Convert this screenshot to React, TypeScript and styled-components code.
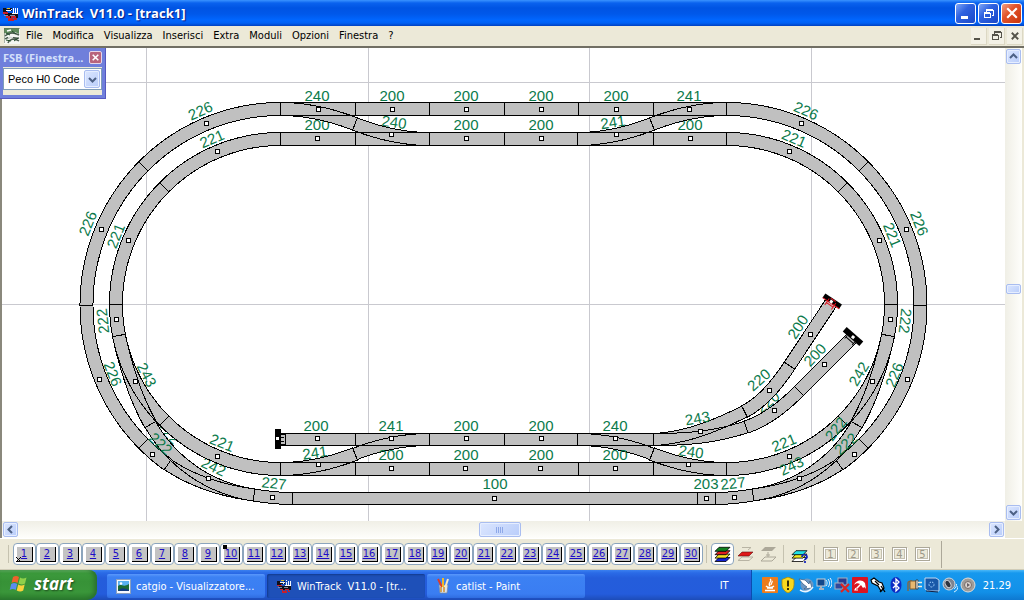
import React from "react";
import styled, { createGlobalStyle, css } from "styled-components";

const UI_FONT = `"DejaVu Sans Condensed", "Open Sans", sans-serif`;

const GlobalStyle = createGlobalStyle`
  * { box-sizing: border-box; }
  html, body { margin: 0; padding: 0; }
  body { font-family: ${UI_FONT}; font-size: 11px; color: #000; overflow: hidden; }
  button, select { font: inherit; color: inherit; margin: 0; padding: 0; border: 0; background: none; }
  svg { display: block; flex: none; }
`;

/* ---------- window frame ---------- */

const Desktop = styled.div`
  display: flex;
  flex-direction: column;
  height: 100vh;
  min-height: 400px;
  background: #ece9d8;
`;

const TitleBar = styled.header`
  display: flex;
  align-items: center;
  flex: none;
  height: 26px;
  padding: 0 2px 0 2px;
  gap: 3px;
  background: linear-gradient(#3a93ff 0, #0a62ee 3px, #0054e3 8px, #0058ea 14px, #0066ff 20px, #0061f5 23px, #0040c0 26px);
`;

const TitleText = styled.h1`
  flex: 1;
  margin: 0;
  font: bold 13px/20px "Open Sans", sans-serif;
  color: #fff;
  text-shadow: 1px 1px 1px #0a1883;
  white-space: pre;
`;

const CaptionButtons = styled.div`
  display: flex;
  gap: 2px;
`;

const CaptionButton = styled.button<{ $close?: boolean }>`
  display: grid;
  place-items: center;
  width: 21px;
  height: 21px;
  border: 1px solid #fff;
  border-radius: 3px;
  background: ${(p) =>
    p.$close
      ? "linear-gradient(135deg, #f0a084, #e2542c 40%, #c8350c)"
      : "linear-gradient(135deg, #7ea6f8, #2f62e0 40%, #1a48c8)"};
`;

const MenuBar = styled.nav`
  display: flex;
  align-items: center;
  flex: none;
  height: 22px;
  padding: 0 1px 0 4px;
  border-bottom: 2px solid #716f64;
  background: #ece9d8;
`;

const MenuItems = styled.div`
  display: flex;
  padding-left: 1px;
`;

const MenuItem = styled.button`
  height: 18px;
  padding: 0 5px;
  line-height: 18px;
`;

const Spacer = styled.span`
  flex: 1;
`;

const MdiButton = styled.button`
  display: grid;
  place-items: center;
  width: 16px;
  height: 17px;
  margin-left: 2px;
  background: #f3f1e6;
  border-right: 1px solid #dcd8c4;
  border-bottom: 1px solid #dcd8c4;
`;

/* ---------- drawing area ---------- */

const WorkArea = styled.main`
  position: relative;
  display: grid;
  grid-template-columns: minmax(0, 1fr) 17px;
  grid-template-rows: minmax(0, 1fr) 17px;
  flex: 1;
  min-height: 0;
  padding-right: 2px;
  border-left: 2px solid #8a887c;
  background: #ece9d8;
`;

const Plan = styled.svg`
  width: 100%;
  height: 100%;
  background: #fff;
`;

const TrackLabel = styled.text`
  font-family: "Liberation Sans", sans-serif;
  font-size: 15px;
  fill: #0b7a4b;
  text-anchor: middle;
`;

const ScrollBar = styled.div<{ $vertical?: boolean }>`
  display: flex;
  flex-direction: ${(p) => (p.$vertical ? "column" : "row")};
  align-items: center;
  padding: 1px;
  background: ${(p) =>
    p.$vertical
      ? "linear-gradient(90deg, #f0efe6, #fefefb)"
      : "linear-gradient(#f0efe6, #fefefb)"};
`;

const ScrollSpace = styled.span<{ $grow: number }>`
  flex: ${(p) => p.$grow} 1 0;
`;

const blueButton = css`
  display: grid;
  place-items: center;
  border: 1px solid #a9bdf0;
  border-radius: 2px;
  background: linear-gradient(135deg, #dbe6ff, #b9cdfa);
  box-shadow: inset 0 0 0 1px #e6eeff;
`;

const ScrollButton = styled.button`
  ${blueButton}
  width: 15px;
  height: 15px;
`;

const ScrollThumb = styled.button<{ $vertical?: boolean }>`
  ${blueButton}
  width: ${(p) => (p.$vertical ? "15px" : "42px")};
  height: ${(p) => (p.$vertical ? "10px" : "15px")};
`;

/* ---------- floating palette ---------- */

const Palette = styled.section`
  position: absolute;
  top: 0;
  left: -2px;
  width: 106px;
  padding: 0 3px 3px;
  border-right: 1px solid #5558c0;
  border-bottom: 1px solid #5558c0;
  background: #6f7fdb;
`;

const PaletteTitle = styled.div`
  display: flex;
  align-items: center;
  height: 19px;
  gap: 1px;
  font: bold 11px/18px "Open Sans", sans-serif;
  color: #d5e0fb;
`;

const PaletteCaption = styled.span`
  flex: 1;
  white-space: nowrap;
`;

const PaletteClose = styled.button`
  display: grid;
  place-items: center;
  width: 13px;
  height: 13px;
  border: 1px solid #e6d5e8;
  border-radius: 2px;
  background: #b8647c;
`;

const PaletteBody = styled.div`
  padding: 1px 0 5px;
  background: #ece9d8;
`;

const ComboBox = styled.label`
  display: grid;
  grid-template-columns: 1fr 17px;
  align-items: center;
  height: 22px;
  border: 1px solid #7f9db9;
  background: #fff;
`;

const Combo = styled.select`
  grid-area: 1 / 1 / 2 / 3;
  appearance: none;
  width: 100%;
  height: 20px;
  padding: 0 18px 0 4px;
  font-family: "Liberation Sans", sans-serif;
  outline: none;
`;

const ComboArrow = styled.span`
  ${blueButton}
  grid-area: 1 / 2 / 2 / 3;
  width: 16px;
  height: 18px;
  pointer-events: none;
`;

/* ---------- layer toolbar ---------- */

const ToolBar = styled.div`
  display: flex;
  align-items: center;
  flex: none;
  height: 32px;
  padding: 0 0 0 5px;
  border-top: 1px solid #fff;
  border-bottom: 1px solid #d0ccb8;
  background: #ece9d8;
`;

const ToolGroup = styled.div`
  display: flex;
  align-items: center;
  height: 27px;
  border-right: 1px solid #aca899;
  padding-right: 7px;
`;

const Rule = styled.span`
  width: 1px;
  height: 18px;
  margin: 0 4px 0 3px;
  background: #c5c2b0;
`;

const LayerButton = styled.button`
  display: grid;
  place-items: center;
  width: 23px;
  height: 22px;
  border: 1px solid #8ca5bd;
  border-radius: 4px;
  background: #fff;
`;

const LayerFace = styled.span`
  position: relative;
  width: 16px;
  height: 15px;
  border-right: 1px solid #000;
  border-bottom: 1px solid #000;
  background: #c3c3c3;
  color: #1c0cc8;
  font: 11px/14px "DejaVu Sans Condensed", sans-serif;
  text-align: center;
  text-decoration: underline;
  white-space: nowrap;
`;

const LayerMark = styled.span`
  position: absolute;
  left: -1px;
  top: -2px;
  width: 4px;
  height: 4px;
  background: #000;
`;

const LayerCross = styled.svg`
  position: absolute;
  left: -1px;
  bottom: -1px;
`;

const ToolButton = styled.button<{ $active?: boolean }>`
  display: grid;
  place-items: center;
  width: 23px;
  height: 22px;
  border: 1px solid ${(p) => (p.$active ? "#8ca5bd" : "transparent")};
  border-radius: 4px;
  background: ${(p) => (p.$active ? "#fff" : "none")};
`;

const SlotFace = styled.span`
  width: 15px;
  height: 14px;
  border: 1px solid #aca899;
  box-shadow: inset 0 0 0 1px #fff, inset 0 0 0 2px #c4c0b0, 1px 1px 0 #fff;
  color: #9c9888;
  font: 11px/13px "DejaVu Sans Condensed", sans-serif;
  text-align: center;
`;

/* ---------- task bar ---------- */

const TaskBar = styled.footer`
  display: flex;
  align-items: stretch;
  flex: none;
  height: 30px;
  background: linear-gradient(#3a80f0 0, #2a6ae6 3px, #245ddb 8px, #245cdc 24px, #1d4cb8 30px);
`;

const StartButton = styled.button`
  display: flex;
  align-items: center;
  width: 97px;
  gap: 5px;
  padding: 0 0 2px 9px;
  margin-right: 10px;
  border-radius: 0 8px 10px 0;
  background: linear-gradient(#6fc06c 0, #3c9a3c 3px, #379237 12px, #3a963a 22px, #2a7a2c 30px);
  box-shadow: inset -3px 0 4px #2a7030;
  color: #fff;
  font: italic bold 17px/20px "Open Sans", sans-serif;
  text-shadow: 1px 1px 2px #1c4a1c;
`;

const TaskButton = styled.button<{ $active?: boolean }>`
  display: flex;
  align-items: center;
  flex: 0 1 158px;
  min-width: 0;
  height: 24px;
  gap: 5px;
  margin: 4px 2px 0 0;
  padding: 0 9px;
  border-radius: 2px;
  color: #fff;
  white-space: pre;
  background: ${(p) =>
    p.$active
      ? "#1e50b8"
      : "linear-gradient(#5a98fc 0, #3c81f3 3px, #3a7df2 20px, #2f6ce0)"};
  box-shadow: ${(p) => (p.$active ? "inset 1px 1px 2px #123a8c" : "none")};
`;

const Language = styled.span`
  align-self: center;
  margin-right: 22px;
  color: #fff;
`;

const Tray = styled.div`
  display: flex;
  align-items: center;
  gap: 2px;
  padding: 0 13px 0 10px;
  border-left: 1px solid #0c4cb0;
  background: linear-gradient(#4ab8f8 0, #1698ee 3px, #1290e8 22px, #0e78d0 30px);
  color: #fff;
`;

const Clock = styled.time`
  margin-left: 5px;
`;

/* ---------- track geometry ---------- */

type Pt = [number, number];
type Sample = { p: Pt; n: Pt };

const CENTER_X2 = 1007;
const flip = (x: number) => CENTER_X2 - x;

function sampleCurve(f: (t: number) => Pt, count: number): Sample[] {
  const out: Sample[] = [];
  for (let i = 0; i <= count; i++) {
    const t = i / count;
    const a = f(t - 0.002);
    const b = f(t + 0.002);
    const dx = b[0] - a[0];
    const dy = b[1] - a[1];
    const len = Math.hypot(dx, dy) || 1;
    out.push({ p: f(t), n: [-dy / len, dx / len] });
  }
  return out;
}

const bezier = (a: Pt, b: Pt, c: Pt, d: Pt) =>
  sampleCurve((t) => {
    const u = 1 - t;
    const k = [u * u * u, 3 * u * u * t, 3 * u * t * t, t * t * t];
    return [
      k[0] * a[0] + k[1] * b[0] + k[2] * c[0] + k[3] * d[0],
      k[0] * a[1] + k[1] * b[1] + k[2] * c[1] + k[3] * d[1],
    ];
  }, 28);

const line = (a: Pt, b: Pt) =>
  sampleCurve((t) => [a[0] + (b[0] - a[0]) * t, a[1] + (b[1] - a[1]) * t], 1);

/** Arc of an ellipse around (cx, cy); angles in degrees, clockwise from east. */
const arc = (cx: number, cy: number, rx: number, ry: number, from: number, to: number) =>
  sampleCurve((t) => {
    const a = ((from + (to - from) * t) * Math.PI) / 180;
    return [cx + rx * Math.cos(a), cy + ry * Math.sin(a)];
  }, 40);

const mirror = (s: Sample[]): Sample[] =>
  s.map(({ p, n }) => ({ p: [flip(p[0]), p[1]] as Pt, n: [-n[0], n[1]] as Pt }));

type Section = { path: Sample[]; half?: number };

const X = [280.5, 355, 429.5, 504, 578.5, 653.5, 726.5];
const TOP_OUT = 109;
const TOP_IN = 139;
const SIDING = 439.5;
const BOT_IN = 469;
const LOW = 498.5;

const outerArc = (a: number, b: number) => arc(280.5, 305, 194, 196, a, b);
const innerArc = (a: number, b: number) => arc(280.5, 304, 164.5, 165, a, b);

const sections: Section[] = [];
const add = (path: Sample[], half?: number) => sections.push({ path, half });
const addBoth = (path: Sample[], half?: number) => {
  add(path, half);
  add(mirror(path), half);
};

addBoth(outerArc(270, 225));
addBoth(outerArc(225, 180));
addBoth(outerArc(180, 135));
addBoth(outerArc(135, 125.5));
addBoth(innerArc(270, 225));
addBoth(innerArc(225, 180));
addBoth(innerArc(180, 169));
for (let i = 0; i < 6; i++) {
  add(line([X[i], TOP_OUT], [X[i + 1], TOP_OUT]));
  add(line([X[i], TOP_IN], [X[i + 1], TOP_IN]));
  add(line([X[i], BOT_IN], [X[i + 1], BOT_IN]));
  if (i < 5) add(line([X[i], SIDING], [X[i + 1], SIDING]), 6);
}
/* crossovers */
addBoth(bezier([X[0], TOP_OUT], [306, TOP_OUT], [332, 115], [355, 124]));
addBoth(bezier([355, 124], [378, 133], [404, TOP_IN], [X[2], TOP_IN]));
addBoth(bezier([X[0], BOT_IN], [306, BOT_IN], [332, 463], [355, 454]));
addBoth(bezier([355, 454], [378, 445], [404, SIDING], [X[2], SIDING]), 6);
/* curved turnouts in the lower corners */
addBoth(bezier([119, 336], [126, 367], [135, 397], [150.5, 424.5]));
addBoth(innerArc(169, 135));
addBoth(innerArc(135, 90));
addBoth(bezier([150.5, 424.5], [172, 463], [211, 489], [254, 495]), 6);
addBoth(bezier([167.8, 464.6], [192, 481], [223, 491], [254, 495]), 6);
addBoth(bezier([254, 495], [266, 497], [280, LOW], [292, LOW]), 6);
add(line([292, LOW], [697.5, LOW]), 6);
add(line([697.5, LOW], [715, LOW]), 6);
/* sidings on the right */
add(bezier([653.5, SIDING], [688, SIDING], [716, 437], [746, 427]), 6);
add(bezier([653.5, SIDING], [687, 438], [717, 425], [744.5, 411.5]), 6);
add(bezier([746, 427], [767, 420], [785, 405], [799, 391]), 6.3);
add(bezier([744.5, 411.5], [763, 402], [778, 383], [789.5, 365.7]), 6.3);
add(line([799, 391], [852, 338]), 6.3);
add(line([789.5, 365.7], [831, 303]), 6.3);

type Label = [string, number, number, number?];

const labelsBelow: Label[] = [
  ["200", 317, 124.5],
  ["200", 690, 124.5],
  ["240", 394, 122.5, 8],
  ["241", 613, 122.5, -8],
  ["241", 315, 453, -8],
  ["240", 691, 452, 8],
  ["242", 213.5, 467, 25],
  ["222", 168, 433, 45],
  ["220", 768, 402, -38],
];

const labelsAbove: Label[] = [
  ["240", 317, 95.5],
  ["200", 392, 95.5],
  ["200", 466, 95.5],
  ["200", 541, 95.5],
  ["200", 616, 95.5],
  ["241", 689, 95.5],
  ["200", 466, 124.5],
  ["200", 541, 124.5],
  ["200", 316, 425.5],
  ["241", 391, 425.5],
  ["200", 466, 425.5],
  ["200", 541, 425.5],
  ["240", 615, 425.5],
  ["200", 391, 455],
  ["200", 466, 455],
  ["200", 541, 455],
  ["200", 615, 455],
  ["100", 495, 484],
  ["203", 706, 484],
  ["226", 200.5, 111, -24],
  ["221", 212, 139, -23],
  ["226", 88, 223.5, -68],
  ["221", 116, 236, -68],
  ["222", 103, 321, -96],
  ["226", 112.5, 374, 68],
  ["243", 146.5, 375, 62],
  ["222", 160.5, 444, 42],
  ["221", 222, 443, 22],
  ["227", 274, 483.5, 6],
  ["226", 806, 111, 24],
  ["221", 794, 138.5, 23],
  ["226", 919, 223.5, 68],
  ["221", 892, 235, 68],
  ["222", 905, 321, 96],
  ["226", 894.5, 375, -68],
  ["242", 859, 374, -60],
  ["222", 836, 429, -52],
  ["222", 846, 444, -42],
  ["221", 784, 443, -22],
  ["243", 791.5, 466, -26],
  ["227", 733, 483.5, -6],
  ["243", 697.5, 418.5, -10],
  ["220", 759, 380, -42],
  ["200", 798, 327, -57],
  ["200", 815, 355, -46],
];

const markers: Pt[] = [
  [318, 109], [392, 109], [466, 109], [541, 109], [616, 109], [689, 109],
  [317, 138], [391, 134], [466, 138], [541, 138], [616, 134], [690, 138],
  [317, 438], [391, 438], [466, 438], [541, 438], [615, 438],
  [318, 464], [391, 468], [465, 468], [540, 468], [615, 468], [688, 464],
  [494, 498], [706, 498], [734, 497], [272, 497],
  [206, 123], [801, 123], [101, 229], [906, 229],
  [217, 151], [789, 151], [128, 240], [879, 240],
  [116, 319], [890, 319], [99, 379], [907, 379], [135, 381], [872, 381],
  [152, 454], [854, 454], [217, 456], [789, 456], [208, 478], [799, 478],
  [700, 431], [769, 390], [774, 410], [810, 334], [824, 364],
];

const pathOf = (pts: Pt[]) => "M" + pts.map((p) => p.map((v) => v.toFixed(2)).join(" ")).join("L");

const edgeOf = (path: Sample[], k: number): Pt[] =>
  path.map(({ p, n }) => [p[0] + n[0] * k, p[1] + n[1] * k]);

function TrackSection({ path, half = 6.5 }: Section) {
  const outline = [...edgeOf(path, half), ...edgeOf(path, -half).reverse()];
  return <path d={pathOf(outline) + "Z"} fill="#c0c0c0" stroke="#000" />;
}

function TrackLabels({ items }: { items: Label[] }) {
  return (
    <>
      {items.map(([text, x, y, turn = 0], i) => (
        <TrackLabel key={i} transform={`translate(${x} ${y}) rotate(${turn})`} y={5}>
          {text}
        </TrackLabel>
      ))}
    </>
  );
}

/** Rails stay visible where two sections share the same bed. */
function TrackEdges() {
  return (
    <g fill="none" stroke="#000" shapeRendering="crispEdges">
      {sections.map(({ path, half = 6.5 }, i) => (
        <path key={i} d={pathOf(edgeOf(path, half)) + pathOf(edgeOf(path, -half))} />
      ))}
    </g>
  );
}

function TrackPlan() {
  return (
    <Plan role="img" aria-label="track1">
      <g transform="translate(-2 -48)">
        <g stroke="#c9c9cf" shapeRendering="crispEdges">
          {[146.5, 368.5, 589.5, 811.5].map((x) => (
            <line key={x} x1={x} x2={x} y1={0} y2={2000} />
          ))}
          {[82.5, 304.5].map((y) => (
            <line key={y} y1={y} y2={y} x1={0} x2={4000} />
          ))}
        </g>
        <TrackLabels items={labelsBelow} />
        <g shapeRendering="crispEdges">
          {sections.map((s, i) => (
            <TrackSection key={i} {...s} />
          ))}
        </g>
        <TrackEdges />
        {/* buffer stops */}
        <g shapeRendering="crispEdges">
          <path d="M281 434h4v10h-4M281 437h3M281 441h3" fill="none" stroke="#000" />
          <rect x={275} y={429} width={6} height={20} fill="#000" />
          <rect x={276} y={437} width={3} height={3} fill="#fff" />
        </g>
        <g transform="translate(832 301.5) rotate(34)">
          <rect x={-10} y={-3} width={20} height={5} fill="#000" />
          <path d="M-10 2h20M-4 -1v8M4 -1v8M-4 4h8M-3 -2h6" stroke="#e0101c" fill="none" />
          <rect x={-2} y={-1} width={3} height={3} fill="#fff" />
        </g>
        <g transform="translate(853 336.5) rotate(41)">
          <rect x={-11} y={-3} width={22} height={6} fill="#000" />
          <path d="M-5 3v4M5 3v4M-5 5h10" stroke="#000" fill="none" />
          <rect x={-1} y={-1} width={3} height={3} fill="#fff" />
        </g>
        <TrackLabels items={labelsAbove} />
        <g fill="#fff" stroke="#000" shapeRendering="crispEdges">
          {markers.map(([x, y], i) => (
            <rect key={i} x={x - 1.5} y={y - 1.5} width={4} height={4} />
          ))}
        </g>
      </g>
    </Plan>
  );
}

/* ---------- icons ---------- */

function TrainIcon({ size = 17 }: { size?: number }) {
  return (
    <svg width={size} height={size} viewBox="0 0 17 17" shapeRendering="crispEdges" aria-hidden="true">
      <path d="M1 3h3v1h4v-1h2v3h-5v1H1zM3 8h13v5H6l-3-3z" fill="#101018" />
      <path d="M4 5h5M8 6l2-2M11 4v4M13 3v5M15 3v5M11 3h1M10 8h6" stroke="#fff" fill="none" />
      <path d="M4 12h3v2h3v-2h3v2h2M6 15h6M1 8h5" stroke="#c8202c" fill="none" strokeWidth="1.4" />
      <path d="M2 10h4M8 10h5" stroke="#8890a8" fill="none" />
      <path d="M5 3h3" stroke="#e8c020" />
    </svg>
  );
}

function DocumentIcon() {
  return (
    <svg width="16" height="16" viewBox="0 0 16 16" aria-hidden="true">
      <rect width="16" height="16" fill="#f4f6f2" />
      <path d="M0 0h15v6l-4-2-5 2-6-1z" fill="#5f8a5c" />
      <path d="M0 0h16M0 0v15" stroke="#5c6c58" />
      <path d="M1 8c4-4 10-3 14-1M1 11c5-4 9 0 14-1M4 15c1-4 7-5 11-2" stroke="#4c5c50" fill="none" strokeWidth="1.500" />
      <path d="M2 5l4 2M8 3l4 3M2 12l5 1M10 13l4-3" stroke="#1e4a28" />
      <path d="M3 3l4-1M4 9h5" stroke="#fff" strokeWidth="1.400" />
    </svg>
  );
}

const Chevron = ({ turn = 0 }: { turn?: number }) => (
  <svg width="9" height="9" viewBox="0 0 9 9" aria-hidden="true">
    <path d="M1 3l3.500 3.500L8 3" transform={`rotate(${turn} 4.5 4.5)`} fill="none" stroke="#4d6185" strokeWidth="2" />
  </svg>
);

const CrossGlyph = ({ size, color, weight }: { size: number; color: string; weight: number }) => (
  <svg width={size} height={size} viewBox="0 0 10 10" aria-hidden="true">
    <path d="M1 1l8 8M9 1l-8 8" stroke={color} strokeWidth={weight} />
  </svg>
);

const RestoreGlyph = ({ color }: { color: string }) => (
  <svg width="11" height="11" viewBox="0 0 11 11" fill="none" stroke={color} shapeRendering="crispEdges" aria-hidden="true">
    <path d="M3 1h7M3 2h7.500v5h-2M3.500 2v2M1 4h6M1 5h6.500v4.500h-6V5" />
  </svg>
);

const MinGlyph = ({ color, width }: { color: string; width: number }) => (
  <svg width="11" height="11" viewBox="0 0 11 11" aria-hidden="true">
    <rect x="1" y="8" width={width} height={color === "#fff" ? 3 : 2} fill={color} />
  </svg>
);

function LayerStack({ fills, help }: { fills: string[]; help?: boolean }) {
  return (
    <svg width="17" height="17" viewBox="0 0 17 17" aria-hidden="true">
      {fills.map((f, i) => {
        const y = 11.5 - i * 3.4;
        return <path key={i} d={`M1 ${y + 4}L5 ${y}H16L12 ${y + 4}Z`} fill={f} stroke="#000" strokeWidth="0.8" />;
      })}
      {help && (
        <path d="M11 11c0-3 5-3 5 0 0 1.500-2 1.500-2 3M14 15v2" stroke="#1020c0" strokeWidth="1.7" fill="none" />
      )}
    </svg>
  );
}

function SplitLayers({ accent, dark }: { accent: string; dark?: boolean }) {
  return (
    <svg width="17" height="17" viewBox="0 0 17 17" aria-hidden="true">
      {dark ? (
        <>
          <path d="M1 5L5 1H16L12 5Z" fill="#aca899" />
          <path d="M8 6v5M6 9h4M1 15l4-4H16l-4 4Z" fill="none" stroke="#aca899" />
        </>
      ) : (
        <>
          <path d="M5 1.500H14L11 4M1 14.500L5 11H16l-4 3.500Z" fill="none" stroke="#b8b4a4" />
          <path d="M1 10L5 6H16L12 10Z" fill={accent} stroke="#601010" strokeWidth="0.6" />
        </>
      )}
    </svg>
  );
}

const WindowsFlag = () => (
  <svg width="20" height="18" viewBox="0 0 20 18" aria-hidden="true">
    <path d="M4 2c2-1.500 4-1.500 6 0L8.500 8c-2-1.500-4-1.500-6 0z" fill="#f0622c" />
    <path d="M11 2.500c2 1.300 4 1.300 6.500 0L16 8.500c-2 1.300-4 1.300-6.500 0z" fill="#8fd04a" />
    <path d="M2.200 9c2-1.500 4-1.500 6 0L6.700 15c-2-1.500-4-1.500-6 0z" fill="#5a8cf0" />
    <path d="M9.200 9.500c2 1.300 4 1.300 6.500 0l-1.500 6c-2 1.300-4 1.300-6.500 0z" fill="#fad23c" />
  </svg>
);

const PictureIcon = () => (
  <svg width="15" height="15" viewBox="0 0 15 15" aria-hidden="true">
    <rect x="0.500" y="0.500" width="14" height="14" fill="#f4f8ff" stroke="#8aa0c0" />
    <rect x="2" y="2" width="11" height="10" fill="#58b0f0" />
    <path d="M2 7c3-3 5 2 11-2v7H2z" fill="#1c6a34" />
    <path d="M2 12c3-4 6-3 11-1v1z" fill="#103c80" />
    <circle cx="5" cy="4.500" r="1.300" fill="#fff" />
  </svg>
);

const PaintIcon = () => (
  <svg width="15" height="16" viewBox="0 0 15 16" aria-hidden="true">
    <path d="M3 7h9l-1 8H4z" fill="#d8e0ec" stroke="#7a8698" strokeWidth="0.700" />
    <path d="M2 1l4 8" stroke="#e03c28" strokeWidth="2" />
    <path d="M7 0v9" stroke="#f0b828" strokeWidth="2" />
    <path d="M12 1L9 10" stroke="#f8e8c0" strokeWidth="2" />
    <path d="M5 9v5M8 9v5" stroke="#d0902c" strokeWidth="1.500" />
  </svg>
);

const trayIcons: { name: string; art: React.ReactNode }[] = [
  {
    name: "Java",
    art: (
      <>
        <rect width="16" height="16" rx="1" fill="#ee7c1c" />
        <path d="M8 2c3 2-3 4 0 7M10 4c1 1-1 2-1 4M4 9c2 2 6 2 8 0M5 11h6M3 13.500h10" stroke="#fff" fill="none" strokeWidth="1.300" />
      </>
    ),
  },
  {
    name: "Security",
    art: (
      <>
        <path d="M8 0l6 2.500v5C14 12 11 14.500 8 16 5 14.500 2 12 2 7.500v-5z" fill="#f8d820" stroke="#a88808" strokeWidth="0.800" />
        <path d="M8 3.500v6M8 11v2" stroke="#332c08" strokeWidth="2" />
      </>
    ),
  },
  {
    name: "Sync",
    art: (
      <>
        <circle cx="9" cy="8" r="6.500" fill="#6c98c4" />
        <path d="M1 2l6 1 4 4 1-3 2 7-8 1 3-2-4-3z" fill="#fff" stroke="#305880" strokeWidth="0.700" />
        <path d="M2 13c4 2.500 9 2 13-3" stroke="#e8f4ff" fill="none" strokeWidth="1.500" />
      </>
    ),
  },
  {
    name: "Wireless",
    art: (
      <>
        <rect x="1" y="2" width="8" height="7" fill="#12488c" stroke="#c8d0d8" />
        <path d="M3 12h5M5 9v3" stroke="#a8b4c0" strokeWidth="2" />
        <path d="M10 3c1.500 2 1.500 4 0 6M12 2c2 2.500 2 6 0 8M14 1c2.500 3 2.500 8 0 10" stroke="#e8f4ff" fill="none" />
      </>
    ),
  },
  {
    name: "Network disconnected",
    art: (
      <>
        <rect x="4" y="1" width="9" height="7" fill="#283c90" stroke="#a8b0c0" />
        <rect x="1" y="6" width="8" height="6" fill="#30489c" stroke="#a8b0c0" />
        <path d="M7 7l8 8M15 7l-8 8" stroke="#e02420" strokeWidth="2.200" />
      </>
    ),
  },
  {
    name: "Antivirus",
    art: (
      <>
        <rect width="16" height="16" rx="1" fill="#dc1420" />
        <path d="M2 8c2-5 8-6 11-2l1 6c-1-2-2-2-3-1L9 8 5 12 4 11l4-4C6 6 4 6 2 8z" fill="#fff" />
        <path d="M4 11l-1 2 3 0" stroke="#fff" strokeWidth="1.200" fill="none" />
      </>
    ),
  },
  {
    name: "Pointer",
    art: (
      <>
        <path d="M1 3l3-2 5 4 3 1 2 5-3 3-3-5-6-3z" fill="#fff" stroke="#000" strokeWidth="1.200" />
        <path d="M5 4l4 4M11 9l4 6M12 13l-2 2" stroke="#000" strokeWidth="1.300" />
      </>
    ),
  },
  {
    name: "Bluetooth",
    art: (
      <>
        <ellipse cx="8" cy="8" rx="5.500" ry="8" fill="#0c2cc4" />
        <path d="M5 5l6 6-3 3V2l3 3-6 6" stroke="#fff" fill="none" strokeWidth="1.300" />
      </>
    ),
  },
  {
    name: "Power",
    art: (
      <>
        <path d="M2 14V6c0-2 2-2 4-2" stroke="#806848" fill="none" strokeWidth="1.500" />
        <path d="M4 4h6v8H4z" fill="#e8b870" stroke="#805c30" />
        <path d="M10 3h2v9h-2z" fill="#fff" stroke="#303030" strokeWidth="0.800" />
        <path d="M12 5.500h4M12 9.500h4" stroke="#f4ecd8" strokeWidth="1.500" />
      </>
    ),
  },
  {
    name: "Graphics",
    art: (
      <>
        <path d="M1 1h11l3 2v11H4l-3-2z" fill="#1858a8" stroke="#c0d8f0" />
        <circle cx="7.500" cy="7.500" r="2.500" fill="none" stroke="#a0d0ff" strokeDasharray="2 1" />
        <path d="M2 14l12 1" stroke="#101c40" />
      </>
    ),
  },
  {
    name: "Volume",
    art: (
      <>
        <circle cx="7" cy="7" r="6" fill="#7c8490" stroke="#d0d8e0" />
        <ellipse cx="6" cy="7" rx="2.500" ry="4" fill="#2c3440" stroke="#c8ccd0" transform="rotate(-30 6 7)" />
        <path d="M12 12c2-1 2.500-3 2.500-5M12 15c3-1 4-4 4-6" stroke="#d8f0ff" fill="none" />
      </>
    ),
  },
  {
    name: "Audio",
    art: (
      <>
        <circle cx="8" cy="8" r="7" fill="#a09c98" stroke="#e0dcd8" />
        <circle cx="8" cy="8" r="3.500" fill="#dcd4d0" stroke="#786c68" />
        <path d="M7 6l3 2-3 2z" fill="#686064" />
      </>
    ),
  },
];

/* ---------- page ---------- */

const menus = ["File", "Modifica", "Visualizza", "Inserisci", "Extra", "Moduli", "Opzioni", "Finestra", "?"];
const layers = Array.from({ length: 30 }, (_, i) => i + 1);

export default function App() {
  return (
    <Desktop>
      <GlobalStyle />
      <TitleBar>
        <TrainIcon />
        <TitleText>{"WinTrack  V11.0 - [track1]"}</TitleText>
        <CaptionButtons>
          <CaptionButton aria-label="Riduci a icona"><MinGlyph color="#fff" width={7} /></CaptionButton>
          <CaptionButton aria-label="Ripristina"><RestoreGlyph color="#fff" /></CaptionButton>
          <CaptionButton $close aria-label="Chiudi"><CrossGlyph size={12} color="#fff" weight={1.8} /></CaptionButton>
        </CaptionButtons>
      </TitleBar>

      <MenuBar>
        <DocumentIcon />
        <MenuItems>
          {menus.map((m) => (
            <MenuItem key={m}>{m}</MenuItem>
          ))}
        </MenuItems>
        <Spacer />
        <MdiButton aria-label="Riduci a icona documento"><MinGlyph color="#55534a" width={6} /></MdiButton>
        <MdiButton aria-label="Ripristina documento"><RestoreGlyph color="#55534a" /></MdiButton>
        <MdiButton aria-label="Chiudi documento"><CrossGlyph size={8} color="#55534a" weight={2.4} /></MdiButton>
      </MenuBar>

      <WorkArea>
        <TrackPlan />
        <ScrollBar $vertical>
          <ScrollButton aria-label="Su"><Chevron turn={180} /></ScrollButton>
          <ScrollSpace $grow={220} />
          <ScrollThumb $vertical aria-label="Scorrimento verticale" />
          <ScrollSpace $grow={211} />
          <ScrollButton aria-label="Giù"><Chevron /></ScrollButton>
        </ScrollBar>
        <ScrollBar>
          <ScrollButton aria-label="Sinistra"><Chevron turn={90} /></ScrollButton>
          <ScrollSpace $grow={461} />
          <ScrollThumb aria-label="Scorrimento orizzontale">
            <svg width="8" height="6" viewBox="0 0 8 6" shapeRendering="crispEdges" aria-hidden="true">
              <path d="M.5 0v6M2.500 0v6M4.500 0v6M6.500 0v6" stroke="#8ea8e8" />
            </svg>
          </ScrollThumb>
          <ScrollSpace $grow={468} />
          <ScrollButton aria-label="Destra"><Chevron turn={-90} /></ScrollButton>
        </ScrollBar>

        <Palette>
          <PaletteTitle>
            <PaletteCaption>FSB (Finestra...</PaletteCaption>
            <PaletteClose aria-label="Chiudi finestra simboli"><CrossGlyph size={7} color="#fff" weight={2.2} /></PaletteClose>
          </PaletteTitle>
          <PaletteBody>
            <ComboBox>
              <Combo aria-label="Sistema di binari" defaultValue="peco">
                <option value="peco">Peco H0 Code</option>
              </Combo>
              <ComboArrow><Chevron /></ComboArrow>
            </ComboBox>
          </PaletteBody>
        </Palette>
      </WorkArea>

      <ToolBar>
        <ToolGroup>
          <Rule />
          {layers.map((n) => (
            <LayerButton key={n}>
              <LayerFace>
                {n}
                {n === 10 && <LayerMark />}
                {n === 1 && (
                  <LayerCross width="6" height="5" viewBox="0 0 6 5">
                    <path d="M0 0l5 5M5 0L0 5" stroke="#000" />
                  </LayerCross>
                )}
              </LayerFace>
            </LayerButton>
          ))}
          <Rule />
          <ToolButton $active aria-label="Tutti i livelli">
            <LayerStack fills={["#1020d0", "#f0e020", "#e02020", "#108020"]} />
          </ToolButton>
          <ToolButton aria-label="Livello attivo"><SplitLayers accent="#e01818" /></ToolButton>
          <ToolButton aria-label="Sposta livello" disabled><SplitLayers accent="#aca899" dark /></ToolButton>
          <Rule />
          <ToolButton aria-label="Informazioni livello">
            <LayerStack fills={["#ffffff", "#f0e820", "#20e0e8"]} help />
          </ToolButton>
          <Rule />
          {[1, 2, 3, 4, 5].map((n) => (
            <ToolButton key={n} disabled aria-label={`Vista ${n}`}>
              <SlotFace>{n}</SlotFace>
            </ToolButton>
          ))}
        </ToolGroup>
      </ToolBar>

      <TaskBar>
        <StartButton>
          <WindowsFlag />
          start
        </StartButton>
        <TaskButton>
          <PictureIcon />
          catgio - Visualizzatore...
        </TaskButton>
        <TaskButton $active>
          <TrainIcon size={16} />
          {"WinTrack  V11.0 - [tr..."}
        </TaskButton>
        <TaskButton>
          <PaintIcon />
          catlist - Paint
        </TaskButton>
        <Spacer />
        <Language>IT</Language>
        <Tray>
          {trayIcons.map(({ name, art }) => (
            <svg key={name} width="16" height="16" viewBox="0 0 16 16" role="img" aria-label={name}>
              {art}
            </svg>
          ))}
          <Clock>21.29</Clock>
        </Tray>
      </TaskBar>
    </Desktop>
  );
}
